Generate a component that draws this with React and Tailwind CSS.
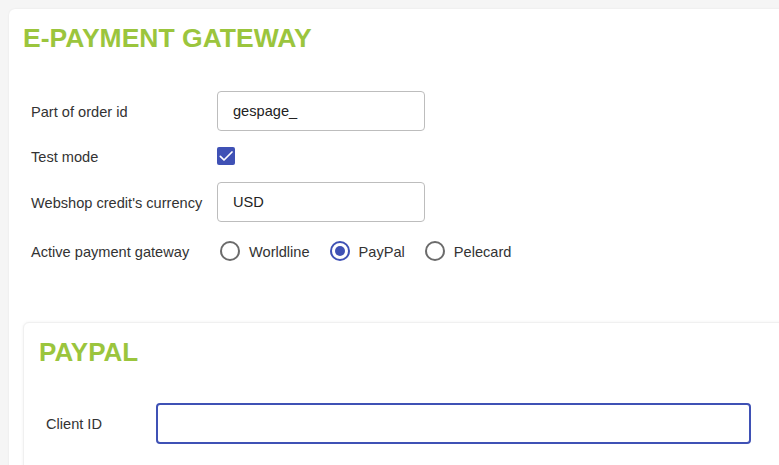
import React from "react";

function Radio({ label, checked }) {
  return (
    <label className="flex items-center">
      <span
        className={`flex h-[20px] w-[20px] items-center justify-center rounded-full border-2 ${
          checked ? "border-[#3f51b5]" : "border-[#6b6b6b]"
        }`}
      >
        {checked && <span className="h-[10px] w-[10px] rounded-full bg-[#3f51b5]" />}
      </span>
      <span className="ml-[9px] pt-[3px] text-[14.6px] text-[#333]">{label}</span>
    </label>
  );
}

function Row({ label, children, className = "" }) {
  return (
    <div className={`flex items-center ${className}`}>
      <div className="w-[186px] pt-[3px] text-[14.6px] text-[#333]">{label}</div>
      {children}
    </div>
  );
}

export default function App() {
  return (
    <div
      className="h-[465px] w-[779px] overflow-hidden bg-[#f5f5f5] pl-[9px] pt-[9px]"
      style={{ fontFamily: '"Liberation Sans", Arial, sans-serif' }}
    >
      <div className="h-[600px] w-[820px] rounded-md bg-white shadow-[0_0_2px_rgba(0,0,0,0.08)]">
        {/* Header */}
        <div className="px-[14px] pt-[15px]">
          <h1 className="text-[26.5px] font-bold leading-[29px] text-[#9bc53d]">E-PAYMENT GATEWAY</h1>
        </div>

        {/* Settings */}
        <div className="mt-[38px] pl-[22px]">
          <Row label="Part of order id">
            <div className="flex h-[40px] w-[208px] items-center rounded-[4px] border border-[#bdbdbd] pl-[15px] pt-[2px] text-[14.6px] text-[#222]">
              gespage_
            </div>
          </Row>
          <Row label="Test mode" className="mt-[12px] h-[26px]">
            <span className="flex h-[18px] w-[18px] items-center justify-center rounded-[2px] bg-[#3f51b5]">
              <svg width="16" height="16" viewBox="0 0 24 24" fill="none" stroke="white" strokeWidth="2.6" strokeLinecap="round" strokeLinejoin="round">
                <path d="M3.5 12.5l5.5 5.5L21 6" />
              </svg>
            </span>
          </Row>
          <Row label="Webshop credit's currency" className="mt-[13px]">
            <div className="flex h-[40px] w-[208px] items-center rounded-[4px] border border-[#bdbdbd] pl-[15px] pt-[2px] text-[14.6px] text-[#222]">
              USD
            </div>
          </Row>
          <Row label="Active payment gateway" className="mt-[14px] h-[30px]">
            <div className="ml-[3px] flex items-center gap-[20px]">
              <Radio label="Worldline" />
              <Radio label="PayPal" checked />
              <Radio label="Pelecard" />
            </div>
          </Row>
        </div>

        {/* PayPal card */}
        <div className="ml-[14px] mt-[56px] h-[200px] rounded-md border border-[#f0f0f0] bg-white shadow-[0_0_3px_rgba(0,0,0,0.06)]">
          <div className="px-[15px] pt-[15px]">
            <h2 className="text-[26px] font-bold leading-[29px] text-[#9bc53d]">PAYPAL</h2>
          </div>
          <div className="mt-[36px] flex items-center pl-[22px]">
            <div className="w-[110px] pt-[3px] text-[14.6px] text-[#333]">Client ID</div>
            <div className="h-[41px] w-[595px] rounded-[4px] border-2 border-[#3f51b5]" />
          </div>
        </div>
      </div>
    </div>
  );
}
